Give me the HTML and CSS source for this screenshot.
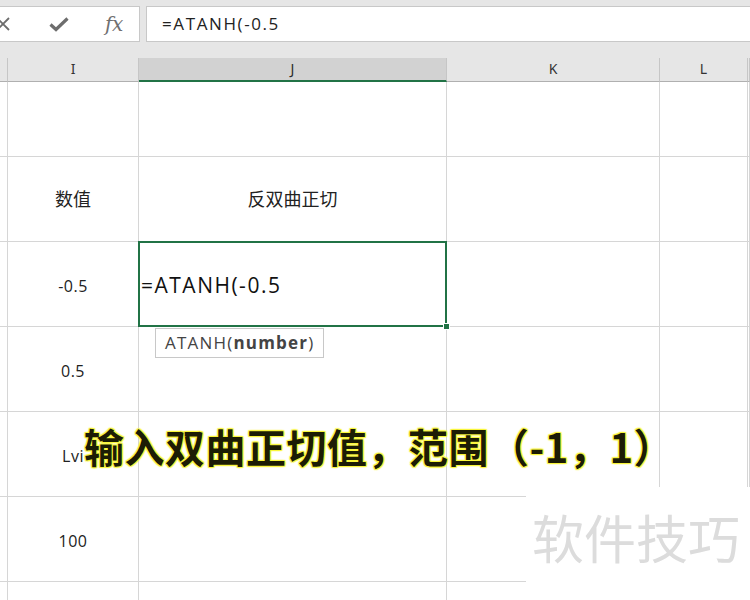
FILE: index.html
```html
<!DOCTYPE html>
<html>
<head>
<meta charset="utf-8">
<link rel="stylesheet" href="styles.css">
</head>
<body>
<div class="app">
  <div class="formula-row">
    <div class="fx-box">
      <span class="icon icon-x"><svg width="16" height="16" viewBox="0 0 16 16"><path d="M2 2 L14 14 M14 2 L2 14" stroke="#6d6d6d" stroke-width="1.8" fill="none"/></svg></span>
      <span class="icon icon-check"><svg width="20" height="16" viewBox="0 0 20 16"><path d="M1.5 8.5 L7 13.5 L18.5 2.5" stroke="#6d6d6d" stroke-width="3.2" fill="none" stroke-linejoin="miter"/></svg></span>
      <span class="icon icon-fx">fx</span>
    </div>
    <div class="formula-input">=ATANH(-0.5</div>
  </div>
  <div class="col-headers">
    <div class="hcell"></div>
    <div class="hcell">I</div>
    <div class="hcell hsel">J</div>
    <div class="hcell">K</div>
    <div class="hcell">L</div>
    <div class="hcell"></div>
  </div>
  <div class="sheet">
    <div class="row r-first"><div class="c"></div><div class="c"></div><div class="c"></div><div class="c"></div><div class="c"></div><div class="c"></div></div>
    <div class="row"><div class="c"></div><div class="c txt">数值</div><div class="c txt">反双曲正切</div><div class="c"></div><div class="c"></div><div class="c"></div></div>
    <div class="row"><div class="c"></div><div class="c num">-0.5</div><div class="c active"><span class="edit">=ATANH(-0.5</span><div class="tip">ATANH(<b>number</b>)</div></div><div class="c"></div><div class="c"></div><div class="c"></div></div>
    <div class="row"><div class="c"></div><div class="c num">0.5</div><div class="c"></div><div class="c"></div><div class="c"></div><div class="c"></div></div>
    <div class="row"><div class="c"></div><div class="c num">Lvi</div><div class="c"></div><div class="c"></div><div class="c"></div><div class="c"></div></div>
    <div class="row"><div class="c"></div><div class="c num">100</div><div class="c"></div><div class="c"></div><div class="c"></div><div class="c"></div></div>
    <div class="row"><div class="c"></div><div class="c"></div><div class="c"></div><div class="c"></div><div class="c"></div><div class="c"></div></div>
  </div>
  <div class="caption">输入双曲正切值，范围（-1，1）</div>
  <div class="watermark">软件技巧</div>
</div>
</body>
</html>
```

FILE: styles.css
```css
html, body {
  margin: 0;
  padding: 0;
  background: #ffffff;
  overflow: hidden;
}
.app {
  position: relative;
  width: 750px;
  height: 600px;
  overflow: hidden;
  font-family: "Open Sans", "Noto Sans", "Noto Sans CJK SC", sans-serif;
}
.formula-row {
  height: 58px;
  box-sizing: border-box;
  background: #e6e6e6;
  padding-top: 6px;
  display: flex;
  gap: 6px;
}
.fx-box {
  width: 140px;
  height: 36px;
  box-sizing: border-box;
  background: #ffffff;
  border: 1px solid #c8c8c8;
  border-left: none;
  position: relative;
  display: flex;
  align-items: center;
}
.icon {
  display: flex;
  align-items: center;
}
.icon-x {
  margin-left: -5px;
}
.icon-check {
  margin-left: 38px;
}
.icon-fx {
  margin-left: 36px;
  font-family: "DejaVu Serif", "Liberation Serif", serif;
  font-style: italic;
  font-size: 20px;
  color: #707070;
  letter-spacing: -0.5px;
}
.formula-input {
  flex: 1;
  height: 36px;
  box-sizing: border-box;
  background: #ffffff;
  border: 1px solid #c8c8c8;
  border-right: none;
  padding-left: 15px;
  font-size: 17px;
  letter-spacing: 1.6px;
  line-height: 33px;
  color: #222;
}
.col-headers {
  display: grid;
  grid-template-columns: 8px 131px 308px 213px 88px 2px;
  height: 24px;
  background: #e6e6e6;
}
.hcell {
  border-right: 1px solid #c6c6c6;
  border-bottom: 1px solid #b0b0b0;
  text-align: center;
  font-size: 14px;
  line-height: 22px;
  color: #333;
  font-family: "Noto Sans", sans-serif;
}
.hcell.hsel {
  background: #d2d2d2;
  border-bottom: 2px solid #217346;
  color: #2b2b2b;
}
.sheet {
  display: flex;
  flex-direction: column;
}
.row {
  display: grid;
  grid-template-columns: 8px 131px 308px 213px 88px 2px;
  height: 85px;
}
.row.r-first {
  height: 75px;
}
.c {
  border-right: 1px solid #d6d6d6;
  border-bottom: 1px solid #d6d6d6;
  display: flex;
  align-items: center;
  justify-content: center;
  color: #222;
}
.c.txt {
  font-family: "Noto Sans CJK SC", sans-serif;
  font-size: 18px;
  font-weight: 400;
  padding-bottom: 2px;
  box-sizing: border-box;
}
.c.num {
  font-family: "Open Sans", sans-serif;
  font-size: 16px;
  letter-spacing: 0.5px;
  padding-top: 3px;
  box-sizing: border-box;
}
.c.active {
  position: relative;
  justify-content: flex-start;
}
.c.active::after {
  content: "";
  position: absolute;
  left: -1px;
  top: -1px;
  right: -1px;
  bottom: -1px;
  border: 2px solid #217346;
}
.c.active::before {
  content: "";
  position: absolute;
  right: -4px;
  bottom: -4px;
  width: 5px;
  height: 5px;
  background: #217346;
  border: 1px solid #ffffff;
  z-index: 2;
}
.edit {
  padding-left: 2px;
  padding-top: 1px;
  font-size: 21px;
  letter-spacing: 1.5px;
  color: #111;
  font-family: "Open Sans", sans-serif;
}
.tip {
  position: absolute;
  left: 16px;
  top: 86px;
  height: 30px;
  box-sizing: border-box;
  padding: 0 9px 0 9px;
  border: 1px solid #c8c8c8;
  background: #ffffff;
  font-family: "Open Sans", sans-serif;
  font-size: 17px;
  letter-spacing: 1.2px;
  line-height: 27px;
  color: #444;
  z-index: 3;
  white-space: nowrap;
}
.tip b {
  font-weight: 700;
}
.caption {
  position: absolute;
  left: 84px;
  top: 418px;
  font-family: "Noto Sans CJK SC", sans-serif;
  font-weight: 700;
  font-size: 40px;
  line-height: 56px;
  color: #1c1c05;
  white-space: nowrap;
  letter-spacing: 0.5px;
  text-shadow: 0 0 1px #ffff40, 0 0 2px #ffff40, 1px 1px 1px #f7f23a, -1px -1px 1px #f7f23a, 1px -1px 1px #f7f23a, -1px 1px 1px #f7f23a;
}
.watermark {
  position: absolute;
  left: 526px;
  top: 487px;
  width: 224px;
  height: 113px;
  background: #ffffff;
  box-sizing: border-box;
  padding-left: 6px;
  padding-top: 15px;
  font-family: "Noto Sans CJK SC", sans-serif;
  font-size: 52px;
  line-height: 70px;
  color: #dcdcdc;
  white-space: nowrap;
}
```
